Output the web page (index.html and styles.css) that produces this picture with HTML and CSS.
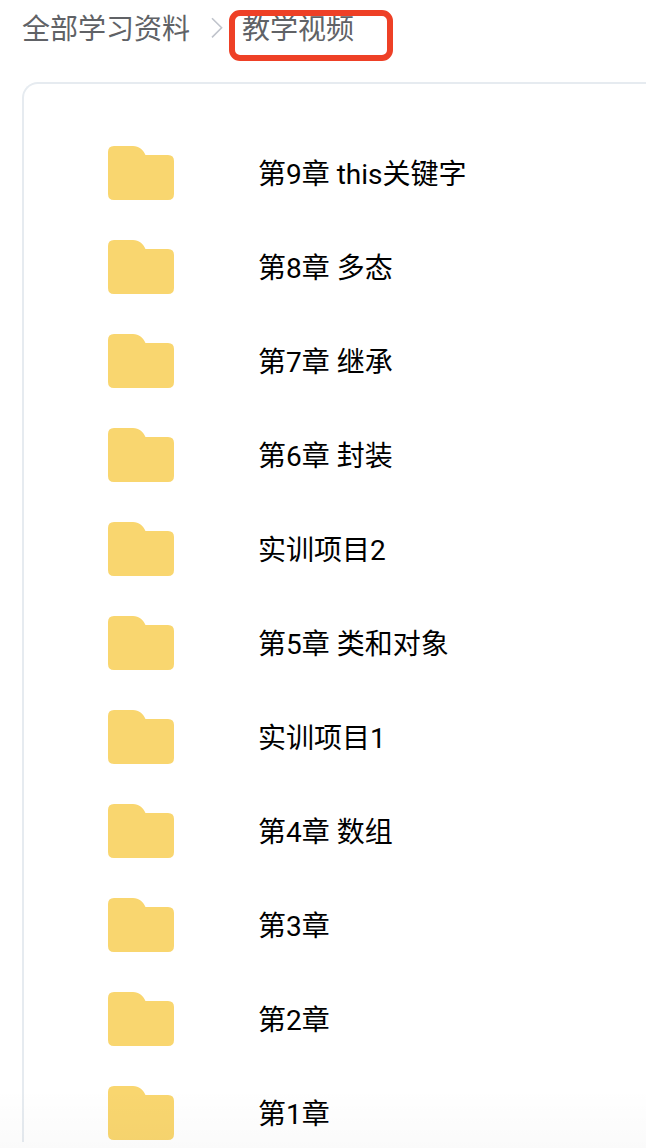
FILE: index.html
```html
<!DOCTYPE html>
<html lang="zh-CN">
  <head>
    <meta charset="UTF-8" />
    <meta name="viewport" content="width=device-width, initial-scale=1.0" />
    <title>教学视频</title>
    <link rel="stylesheet" href="styles.css">
  </head>
  <body>
    <!-- folder icon shared by all rows -->
    <svg class="sprite" aria-hidden="true">
      <symbol id="folder" viewBox="0 0 66 54">
        <path d="M6 0H25C31 0 35 3.5 37.5 9H60Q66 9 66 15V48Q66 54 60 54H6Q0 54 0 48V6Q0 0 6 0Z" />
      </symbol>
    </svg>

    <div class="page">
      <nav class="breadcrumb">
        <span class="breadcrumb__item">全部学习资料</span>
        <svg class="breadcrumb__arrow" viewBox="0 0 12 22">
          <path d="M1 1.2L10.6 10.8L1 20.4" />
        </svg>
        <span class="breadcrumb__item breadcrumb__item--marked">教学视频</span>
      </nav>

      <div class="panel">
        <ul class="list">
          <li class="row"><svg class="row__icon"><use href="#folder" /></svg><span class="row__name">第9章 this关键字</span></li>
          <li class="row"><svg class="row__icon"><use href="#folder" /></svg><span class="row__name">第8章 多态</span></li>
          <li class="row"><svg class="row__icon"><use href="#folder" /></svg><span class="row__name">第7章 继承</span></li>
          <li class="row"><svg class="row__icon"><use href="#folder" /></svg><span class="row__name">第6章 封装</span></li>
          <li class="row"><svg class="row__icon"><use href="#folder" /></svg><span class="row__name">实训项目2</span></li>
          <li class="row"><svg class="row__icon"><use href="#folder" /></svg><span class="row__name">第5章 类和对象</span></li>
          <li class="row"><svg class="row__icon"><use href="#folder" /></svg><span class="row__name">实训项目1</span></li>
          <li class="row"><svg class="row__icon"><use href="#folder" /></svg><span class="row__name">第4章 数组</span></li>
          <li class="row"><svg class="row__icon"><use href="#folder" /></svg><span class="row__name">第3章</span></li>
          <li class="row"><svg class="row__icon"><use href="#folder" /></svg><span class="row__name">第2章</span></li>
          <li class="row"><svg class="row__icon"><use href="#folder" /></svg><span class="row__name">第1章</span></li>
        </ul>
      </div>
      <div class="fade"></div>
    </div>
  </body>
</html>
```
FILE: styles.css
```css
* {
  padding: 0;
  margin: 0;
  box-sizing: border-box;
}

body {
  background: #fff;
  font-family: Roboto, "Noto Sans CJK SC", sans-serif;
  font-size: 28px;
  line-height: 40px;
  color: #000;
}

.sprite {
  display: none;
}

.page {
  position: relative;
  height: 1148px;
  padding-left: 22px;
  overflow: hidden;
}

.breadcrumb {
  display: flex;
  align-items: center;
  height: 82px;
  padding-bottom: 26px;
  color: #606266;
}

.breadcrumb__item {
  padding-top: 4px;
}

.breadcrumb__arrow {
  width: 12px;
  height: 22px;
  margin: 0 19px 0 21px;
  fill: none;
  stroke: #c0c4cc;
  stroke-width: 1.6;
}

.breadcrumb__item--marked {
  position: relative;
}

/* red frame over the current folder */
.breadcrumb__item--marked::after {
  content: "";
  position: absolute;
  top: 4px;
  left: -13px;
  box-sizing: border-box;
  width: 164px;
  height: 51px;
  border: 6px solid #ee4026;
  border-radius: 11px;
}

.panel {
  height: 1060px;
  padding: 42px 0 0 84px;
  border: 2px solid #e6ebf0;
  border-right: 0;
  border-bottom: 0;
  border-top-left-radius: 16px;
  overflow: hidden;
}

.list {
  list-style: none;
}

.row {
  display: flex;
  align-items: center;
  gap: 84px;
  height: 94px;
}

.row__icon {
  flex: none;
  width: 66px;
  height: 54px;
  fill: #f9d66f;
}

.row__name {
  padding-top: 3px;
}

.fade {
  position: absolute;
  left: 0;
  right: 0;
  bottom: 0;
  height: 60px;
  background: linear-gradient(rgba(0, 0, 0, 0), rgba(0, 0, 0, 0.02));
}
```
